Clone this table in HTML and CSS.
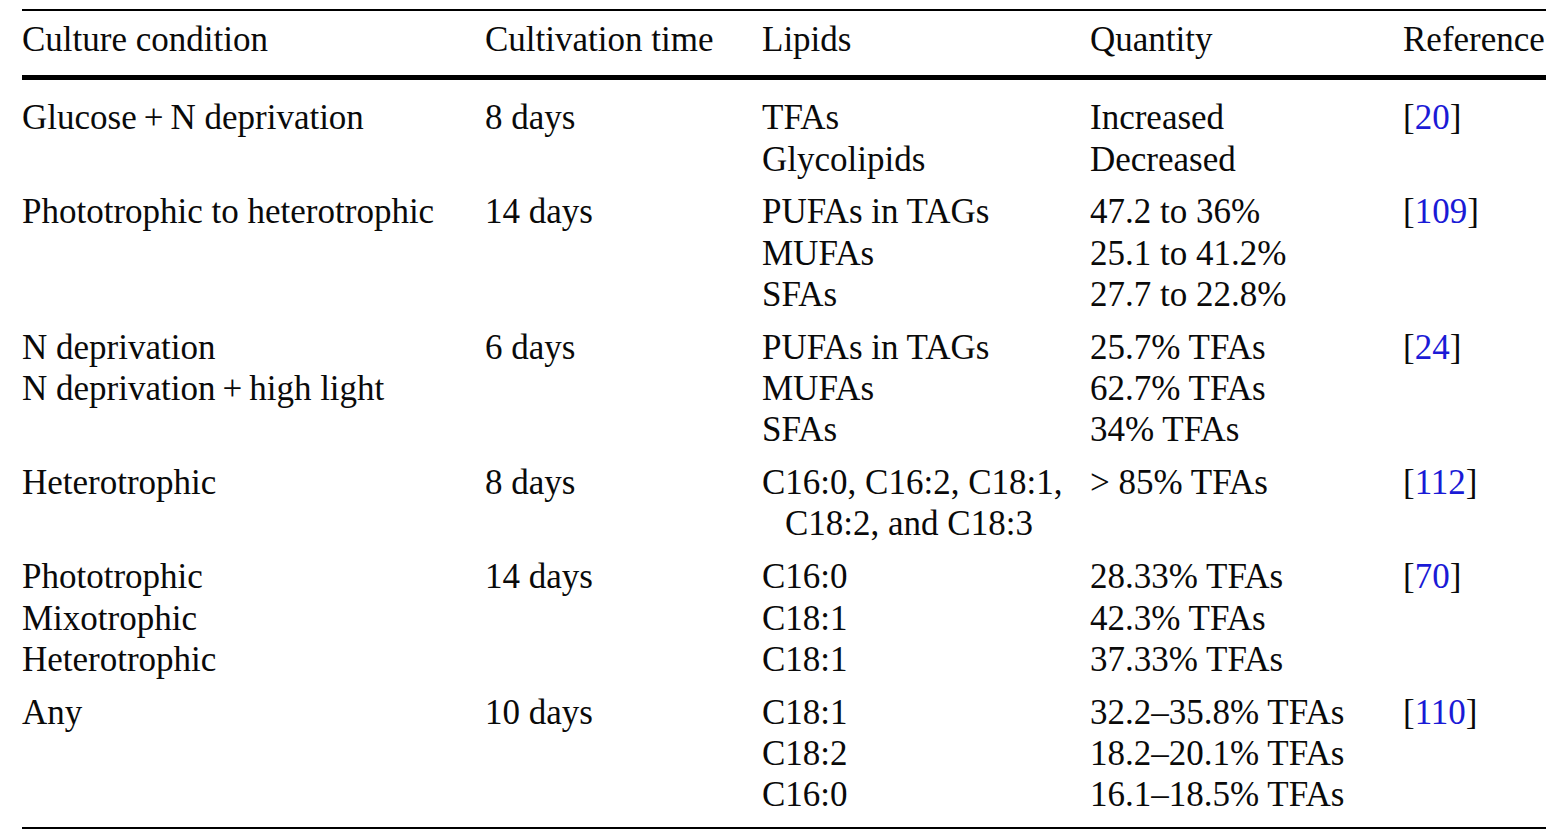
FILE: index.html
```html
<!DOCTYPE html>
<html lang="en">
<head>
<meta charset="utf-8">
<title>Lipid composition under culture conditions</title>
<link rel="stylesheet" href="styles.css">
</head>
<body>
<div class="wrap">
<table class="tbl">
  <colgroup>
    <col class="c1"><col class="c2"><col class="c3"><col class="c4"><col class="c5">
  </colgroup>
  <thead>
    <tr>
      <th>Culture condition</th>
      <th>Cultivation time</th>
      <th>Lipids</th>
      <th>Quantity</th>
      <th>Reference</th>
    </tr>
  </thead>
  <tbody>
    <tr>
      <td>Glucose&thinsp;+&thinsp;N deprivation</td>
      <td>8 days</td>
      <td>TFAs<br>Glycolipids</td>
      <td>Increased<br>Decreased</td>
      <td>[<span class="ref">20</span>]</td>
    </tr>
    <tr>
      <td>Phototrophic to heterotrophic</td>
      <td>14 days</td>
      <td>PUFAs in TAGs<br>MUFAs<br>SFAs</td>
      <td>47.2 to 36%<br>25.1 to 41.2%<br>27.7 to 22.8%</td>
      <td>[<span class="ref">109</span>]</td>
    </tr>
    <tr>
      <td>N deprivation<br>N deprivation&thinsp;+&thinsp;high light</td>
      <td>6 days</td>
      <td>PUFAs in TAGs<br>MUFAs<br>SFAs</td>
      <td>25.7% TFAs<br>62.7% TFAs<br>34% TFAs</td>
      <td>[<span class="ref">24</span>]</td>
    </tr>
    <tr>
      <td>Heterotrophic</td>
      <td>8 days</td>
      <td><div class="hang">C16:0, C16:2, C18:1, C18:2, and C18:3</div></td>
      <td>&gt; 85% TFAs</td>
      <td>[<span class="ref">112</span>]</td>
    </tr>
    <tr>
      <td>Phototrophic<br>Mixotrophic<br>Heterotrophic</td>
      <td>14 days</td>
      <td>C16:0<br>C18:1<br>C18:1</td>
      <td>28.33% TFAs<br>42.3% TFAs<br>37.33% TFAs</td>
      <td>[<span class="ref">70</span>]</td>
    </tr>
    <tr>
      <td>Any</td>
      <td>10 days</td>
      <td>C18:1<br>C18:2<br>C16:0</td>
      <td>32.2–35.8% TFAs<br>18.2–20.1% TFAs<br>16.1–18.5% TFAs</td>
      <td>[<span class="ref">110</span>]</td>
    </tr>
  </tbody>
</table>
</div>
</body>
</html>
```

FILE: styles.css
```css
html, body {
  margin: 0;
  padding: 0;
  background: #ffffff;
}

.wrap {
  padding: 9px 0 0 22px;
}

.tbl {
  width: 1524px;
  table-layout: fixed;
  border-collapse: collapse;
  font-family: "Liberation Serif", "Times New Roman", serif;
  font-size: 35px;
  line-height: 41.3px;
  color: #0a0a0a;
}

.c1 { width: 463px; }
.c2 { width: 277px; }
.c3 { width: 328px; }
.c4 { width: 313px; }
.c5 { width: 143px; }

.tbl thead tr {
  border-top: 2px solid #000000;
  border-bottom: 5px solid #000000;
}

.tbl th {
  font-weight: normal;
  text-align: left;
  white-space: nowrap;
  padding: 8px 0 15px 0;
  vertical-align: top;
}

.tbl td {
  text-align: left;
  vertical-align: top;
  white-space: nowrap;
  padding: 5.75px 0;
}

.tbl tbody tr:first-child td {
  padding-top: 17px;
}

.tbl tbody tr:last-child td {
  padding-bottom: 11.5px;
}

.tbl tbody tr:last-child {
  border-bottom: 2px solid #000000;
}

.hang {
  white-space: normal;
  width: 310px;
  padding-left: 23px;
  text-indent: -23px;
}

.ref {
  color: #1a1ad6;
}
```
